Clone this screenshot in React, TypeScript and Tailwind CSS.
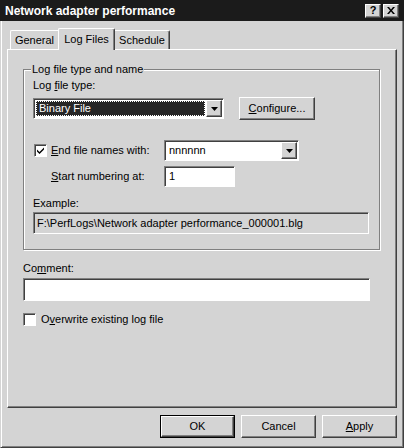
import React from "react";

const raised =
  "border border-t-white border-l-white border-r-[#404040] border-b-[#404040] shadow-[inset_-1px_-1px_0_#808080]";
const sunken =
  "border border-t-[#808080] border-l-[#808080] border-r-white border-b-white shadow-[inset_1px_1px_0_#404040]";

function Arrow() {
  return (
    <svg width="7" height="4" viewBox="0 0 7 4">
      <path d="M0 0h7L3.5 4z" fill="#000" />
    </svg>
  );
}

function DropBtn() {
  return (
    <div className={`${raised} w-[16px] h-full flex items-center justify-center bg-[#d4d4d4]`}>
      <Arrow />
    </div>
  );
}

function CheckBox({ checked }: { checked?: boolean }) {
  return (
    <div className={`${sunken} w-[13px] h-[13px] bg-white flex items-center justify-center shrink-0`}>
      {checked && (
        <svg width="7" height="7" viewBox="0 0 7 7">
          <path d="M0 2.5l2.5 2.5L7 0.5v2L2.5 7 0 4.5z" fill="#000" />
        </svg>
      )}
    </div>
  );
}

function PushButton({ children, def }: { children: React.ReactNode; def?: boolean }) {
  return (
    <div className={def ? "border border-black w-[75px] h-[23px] flex" : "w-[75px] h-[23px] flex"}>
      <div className={`${raised} flex-1 flex items-center justify-center`}>{children}</div>
    </div>
  );
}

export default function App() {
  return (
    <div className="w-[404px] h-[448px] bg-[#d4d4d4] flex flex-col overflow-hidden font-['Liberation_Sans',Arial,sans-serif] text-[11px] leading-[13px] text-black">
      {/* title bar */}
      <div className="h-[21px] bg-[#1b1b1b] flex items-center pl-[5px] pr-[5px] shrink-0">
        <span className="flex-1 text-white font-bold text-[12px] leading-[14px]">Network adapter performance</span>
        <div className={`${raised} w-[16px] h-[14px] bg-[#d4d4d4] flex items-center justify-center font-bold text-[11px] leading-[11px]`}>
          ?
        </div>
        <div className={`${raised} ml-[2px] w-[16px] h-[14px] bg-[#d4d4d4] flex items-center justify-center`}>
          <svg width="8" height="7" viewBox="0 0 8 7">
            <path d="M0 0h2l2 2.5L6 0h2L5 3.5 8 7H6L4 4.5 2 7H0l3-3.5z" fill="#000" />
          </svg>
        </div>
      </div>

      {/* body */}
      <div className="flex-1 flex flex-col border-l border-l-[#d4d4d4] border-r border-r-[#404040] border-b border-b-[#404040] shadow-[inset_1px_0_0_white,inset_-1px_-1px_0_#808080] px-[6px]">
        {/* tabs */}
        <div className="mt-[7px] h-[21px] flex items-end pl-[3px]">
          <div className="w-[48px] h-[19px] border-t border-l border-t-white border-l-white rounded-tl-[2px] flex items-center justify-center pt-[1px]">
            General
          </div>
          <div className="relative z-10 w-[57px] h-[22px] -mb-px bg-[#d4d4d4] border-t border-l border-r border-t-white border-l-white border-r-[#404040] shadow-[inset_-1px_0_0_#808080] rounded-t-[2px] flex items-start justify-center pt-[4px]">
            Log Files
          </div>
          <div className="w-[55px] h-[19px] border-t border-r border-t-white border-r-[#404040] shadow-[inset_-1px_0_0_#808080] rounded-tr-[2px] flex items-center justify-center pt-[1px]">
            Schedule
          </div>
        </div>

        {/* tab panel */}
        <div className="h-[359px] border-t border-l border-t-white border-l-white border-r border-b border-r-[#404040] border-b-[#404040] shadow-[inset_-1px_-1px_0_#808080] pl-[15px] pt-[19px] flex flex-col">
          {/* group box */}
          <div className="relative w-[357px] h-[181px] border border-[#808080] shadow-[inset_1px_1px_0_white,1px_1px_0_white] flex flex-col">
            <span className="absolute top-[-7px] left-[7px] px-[1px] bg-[#d4d4d4]">Log file type and name</span>

            <div className="ml-[9px] mt-[9px]">
              Log <span className="underline">f</span>ile type:
            </div>

            <div className="mt-[5px] h-[23px] flex items-center">
              <div className={`${sunken} ml-[9px] w-[191px] h-[21px] bg-white flex p-[1px]`}>
                <div className="flex-1 bg-[#262626] m-[1px] mr-[1px] flex items-center">
                  <div className="flex-1 h-full border border-dotted border-white text-white pl-[2px] flex items-center">
                    Binary File
                  </div>
                </div>
                <DropBtn />
              </div>
              <div className="ml-[15px] flex">
                <div className="w-[76px] h-[23px] flex">
                  <div className={`${raised} flex-1 flex items-center justify-center`}>
                    <span>
                      <span className="underline">C</span>onfigure...
                    </span>
                  </div>
                </div>
              </div>
            </div>

            <div className="mt-[20px] h-[21px] flex items-center">
              <div className="ml-[10px]">
                <CheckBox checked />
              </div>
              <div className="w-[117px] pl-[4px]">
                <span className="underline">E</span>nd file names with:
              </div>
              <div className={`${sunken} w-[135px] h-[21px] bg-white flex p-[1px]`}>
                <div className="flex-1 flex items-center pl-[3px]">nnnnnn</div>
                <DropBtn />
              </div>
            </div>

            <div className="mt-[5px] h-[21px] flex items-center">
              <div className="ml-[27px] w-[113px]">
                <span className="underline">S</span>tart numbering at:
              </div>
              <div className={`${sunken} w-[71px] h-[21px] bg-white flex items-center pl-[4px]`}>1</div>
            </div>

            <div className="ml-[9px] mt-[10px]">Example:</div>
            <div className={`${sunken} ml-[9px] mt-[2px] w-[336px] h-[22px] flex items-center pl-[3px]`}>
              F:\PerfLogs\Network adapter performance_000001.blg
            </div>
          </div>

          <div className="mt-[12px]">
            Co<span className="underline">m</span>ment:
          </div>
          <div className={`${sunken} mt-[3px] w-[347px] h-[23px] bg-white`} />

          <div className="mt-[12px] flex items-center">
            <CheckBox />
            <span className="ml-[5px]">
              O<span className="underline">v</span>erwrite existing log file
            </span>
          </div>
        </div>

        {/* buttons */}
        <div className="mt-[7px] flex justify-end gap-[6px]">
          <PushButton def>OK</PushButton>
          <PushButton>Cancel</PushButton>
          <PushButton>
            <span>
              <span className="underline">A</span>pply
            </span>
          </PushButton>
        </div>
      </div>
    </div>
  );
}
